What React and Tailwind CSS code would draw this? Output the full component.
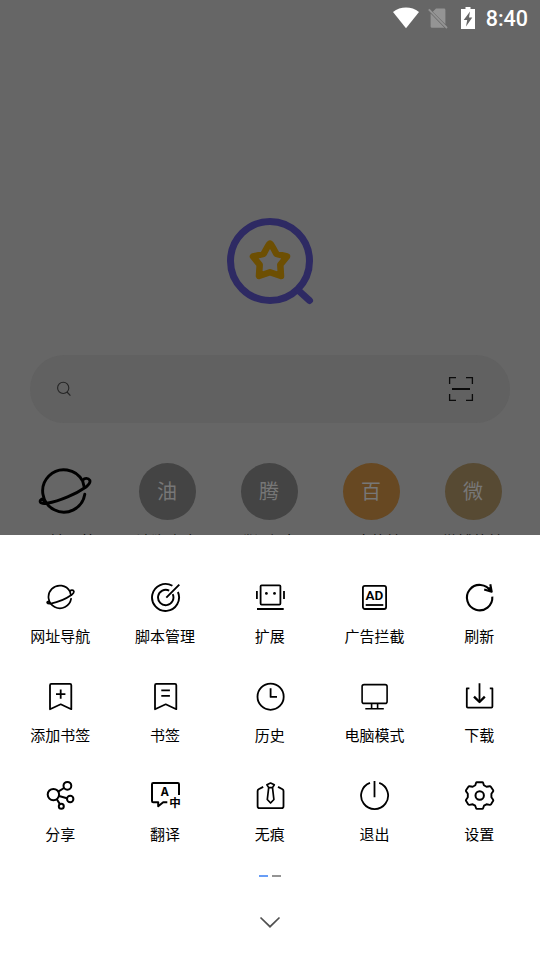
const FONT = "font-['Noto_Sans_CJK_SC',sans-serif]";

function Planet({ className, stroke }) {
  return (
    <svg viewBox="0 0 54 50" className={className} fill="none" stroke="currentColor" strokeWidth={stroke} strokeLinecap="round" strokeLinejoin="round">
      <path d="M46.8 27.3A21.2 21.2 0 1 1 44.7 14.2L46.3 20.5" />
      <path d="M45 13C46.500 10.800 50.300 10.800 51.800 13.200C52.600 15.500 50.500 18 48 20C38 27 22 34 9 36.300C5.500 36.800 3.200 36.800 2.400 35.200C1.600 33.400 3.200 32 5.200 32L6.600 36" />
    </svg>
  );
}

function Icon({ children, width = 1.8 }) {
  return (
    <svg viewBox="0 0 32 32" className="h-8 w-8 shrink-0" fill="none" stroke="currentColor" strokeWidth={width} strokeLinejoin="round">
      {children}
    </svg>
  );
}

const menu = [
  {
    label: "网址导航",
    icon: (
      <span className="flex h-8 w-8 items-center justify-center pb-px">
        <Planet className="h-[27px] w-[29px]" stroke={3.2} />
      </span>
    ),
  },
  {
    label: "脚本管理",
    icon: (
      <Icon width={1.9}>
        <path d="M23.4 3.8A13.5 13.5 0 1 0 28.9 10M20.2 8.6A7.7 7.7 0 1 0 23.7 12.2M17.3 15.7L30.3 2.7" />
      </Icon>
    ),
  },
  {
    label: "扩展",
    icon: (
      <Icon>
        <rect x="6.6" y="3.3" width="19.8" height="19.3" rx="1" />
        <path d="M2.9 9v8M30 9v8M3 27h26.7" />
        <circle cx="12.4" cy="11.4" r="1.4" fill="currentColor" stroke="none" />
        <circle cx="20.5" cy="11.4" r="1.4" fill="currentColor" stroke="none" />
      </Icon>
    ),
  },
  {
    label: "广告拦截",
    icon: (
      <Icon>
        <rect x="3.9" y="3.8" width="23.2" height="23.2" rx="2" />
        <path d="M6.7 23h17.6" />
        <text x="15.5" y="18.2" textAnchor="middle" fill="currentColor" stroke="none" className="font-[Roboto,sans-serif] text-[13.5px] font-semibold">AD</text>
      </Icon>
    ),
  },
  {
    label: "刷新",
    icon: (
      <Icon width={2.1}>
        <path d="M28.3 14.7A12.7 12.7 0 1 1 26.7 9.4M26.3 2.3L27.7 9.7L20.2 7.6M24.5 5.5L27.3 9.4" />
      </Icon>
    ),
  },
  {
    label: "添加书签",
    icon: (
      <Icon>
        <path d="M6 28.2V4.2Q6 2.9 7.3 2.9H26Q27.3 2.9 27.3 4.2V28.2L16.7 23.3ZM16.7 8.4v9.4M12 13.1h9.4" />
      </Icon>
    ),
  },
  {
    label: "书签",
    icon: (
      <Icon>
        <path d="M6 28.2V4.2Q6 2.9 7.3 2.9H26Q27.3 2.9 27.3 4.2V28.2L16.7 23.3ZM12.3 9.3h8.6M12.3 14.8h8.6" />
      </Icon>
    ),
  },
  {
    label: "历史",
    icon: (
      <Icon>
        <circle cx="16.6" cy="15.7" r="13.1" />
        <path d="M16.6 7.3v8.6H23" />
      </Icon>
    ),
  },
  {
    label: "电脑模式",
    icon: (
      <Icon width={1.6}>
        <rect x="3.1" y="3.6" width="25" height="18.8" rx="2" />
        <path d="M12.6 22.4v5.2M18.6 22.4v5.2M6.3 27.7h18.5" />
      </Icon>
    ),
  },
  {
    label: "下载",
    icon: (
      <Icon>
        <path d="M5.4 7.4H2.8V25.6Q2.8 26.6 3.8 26.6H27.4Q28.4 26.6 28.4 25.6V7.4H25.8M15.5 2.3V20.8" />
        <path d="M10 15.6L15.5 21L20.8 15.6" strokeWidth="2.3" />
      </Icon>
    ),
  },
  {
    label: "分享",
    icon: (
      <Icon width={2}>
        <circle cx="9.4" cy="14.6" r="5.7" />
        <circle cx="23.4" cy="5.8" r="3.9" />
        <circle cx="26.2" cy="19" r="3.2" />
        <circle cx="17.3" cy="26.3" r="2.5" />
        <path d="M14.2 11.6L20 8M15.1 16L22.9 18.2M12.8 19.2L15.9 24.1" />
      </Icon>
    ),
  },
  {
    label: "翻译",
    icon: (
      <Icon width={2}>
        <path d="M30 15V4.2Q30 3 28.8 3H4.2Q3 3 3 4.2V21.1Q3 22.3 4.2 22.3H9.2V26.3L14.2 22.3H18.3" />
        <text x="15.7" y="16" textAnchor="middle" fill="currentColor" stroke="none" className="font-['Noto_Sans',sans-serif] text-[11.5px] font-bold">A</text>
        <text x="26" y="26.6" textAnchor="middle" fill="currentColor" stroke="none" className="font-['Noto_Sans_CJK_SC',sans-serif] text-[11.5px] font-bold">中</text>
      </Icon>
    ),
  },
  {
    label: "无痕",
    icon: (
      <Icon>
        <path d="M9.2 6.9L4.6 9.2Q3.6 9.8 3.6 11V26.3Q3.6 28.2 5.5 28.2H27.6Q29.5 28.2 29.5 26.3V11Q29.5 9.8 28.5 9.2L24 6.9" />
        <path d="M14.7 7.6L12.9 4.7L16.6 3L20.3 4.7L18.5 7.6ZM14.7 7.6L13.3 19.5L16.6 23L19.9 19.5L18.5 7.6" strokeWidth="1.7" />
      </Icon>
    ),
  },
  {
    label: "退出",
    icon: (
      <Icon>
        <path d="M11 2.9A13.5 13.5 0 1 0 20.2 2.9M15.5 1V17.2" />
      </Icon>
    ),
  },
  {
    label: "设置",
    icon: (
      <Icon width={1.9}>
        <path d="M12.9 2.200H18.300Q18.900 2.200 19.100 2.800L19.900 5.300L22.500 6.800L25.700 6.200Q26.400 6.100 26.800 6.700L29.200 10.300Q29.500 10.900 29.100 11.400L27.400 13.700V17.300L29.100 19.700Q29.500 20.300 29.200 20.800L26.900 24.500Q26.500 25 25.800 24.900L22.500 24.300L20 25.700L19.100 28.300Q18.900 28.900 18.300 28.900H12.900Q12.300 28.900 12.100 28.300L11.200 25.700L8.700 24.300L5.400 24.900Q4.700 25 4.300 24.500L2 20.800Q1.700 20.300 2.100 19.700L3.800 17.300V13.700L2.100 11.400Q1.700 10.900 2 10.300L4.400 6.700Q4.800 6.100 5.500 6.200L8.700 6.800L11.300 5.300L12.100 2.800Q12.300 2.200 12.900 2.200Z" />
        <circle cx="15.7" cy="15.5" r="4.2" strokeWidth="2" />
      </Icon>
    ),
  },
];

const sites = [
  { label: "网址导航" },
  { glyph: "油", label: "油猴脚本", color: "bg-[#444444]" },
  { glyph: "腾", label: "腾讯视频", color: "bg-[#444444]" },
  { glyph: "百", label: "百度热榜", color: "bg-[#674822]" },
  { glyph: "微", label: "微博热榜", color: "bg-[#574a33]" },
];

function StatusBar() {
  return (
    <header className="flex h-9 shrink-0 items-center justify-end pr-3 text-white">
      <svg viewBox="0 0 26 22" className="mr-[9px] h-[22px] w-[26px]" fill="currentColor">
        <path d="M0 5C7.500-.9 18.500-.9 26 5L13 21.300Z" />
      </svg>
      <svg viewBox="0 0 20 22" className="mr-[13px] h-[22px] w-5">
        <path d="M8 1.500H16Q17.400 1.500 17.400 2.900V17.300L4.800 4.700ZM2.600 6.500L16.500 20.800H4Q2.600 20.800 2.600 19.400Z" fill="#949494" />
        <path d="M.8 2.300L19 21" stroke="#949494" strokeWidth="1.800" />
      </svg>
      <svg viewBox="0 0 14 22" className="mr-[11px] h-[22px] w-[14px]">
        <path d="M4.500 0H9.500V2H14V22H0V2H4.500Z" fill="#fff" />
        <path d="M9 4.500L2.700 13H6.200L5 19.500L11.300 10.500H8Z" fill="#666" />
      </svg>
      <span className="pt-px font-[Roboto,sans-serif] text-[21.5px] font-medium leading-9">8:40</span>
    </header>
  );
}

export default function App() {
  return (
    <main className={`flex h-[960px] w-[540px] flex-col overflow-hidden bg-[#666666] ${FONT}`}>
      <section className="flex h-[535px] shrink-0 flex-col overflow-hidden">
        <StatusBar />
        <svg viewBox="0 0 90 90" className="mt-[180px] h-[90px] w-[90px] shrink-0 self-center" fill="none" strokeLinecap="round" strokeLinejoin="round">
          <g stroke="#2e2a63" strokeWidth="7">
            <circle cx="45" cy="45" r="39.500" />
            <path d="M73.500 74.500L84.500 84.500" />
          </g>
          <path d="M45 27.500Q46 27.500 51.300 37.800L62 40.500L55.300 48.800L56 60L45 56.200L34 60L34.700 48.800L28 40.500L38.700 37.800Q44 27.500 45 27.500Z" stroke="#6d4f03" strokeWidth="6.500" />
        </svg>
        <div className="mx-[30px] mt-[49px] flex h-[68px] shrink-0 items-center justify-between rounded-full bg-[#616161] pl-[26px] pr-9">
          <svg viewBox="0 0 16 16" className="h-4 w-4" fill="none" stroke="#252525" strokeWidth="1.100">
            <circle cx="7.200" cy="6.900" r="5.600" />
            <path d="M11 11L14.400 14.600" />
          </svg>
          <svg viewBox="0 0 26 26" className="h-[26px] w-[26px]" fill="none" stroke="#0b0b0b" strokeWidth="1.300">
            <path d="M1.600 8V1.600H8M18 1.600H24.400V8M24.400 18V24.400H18M8 24.400H1.600V18" />
            <path d="M4 13H22" strokeWidth="2" />
          </svg>
        </div>
        <div className="mt-10 grid shrink-0 grid-cols-5 pl-[14px] pr-4">
          {sites.map((site) => (
            <div key={site.label} className="flex flex-col items-center">
              {site.glyph ? (
                <span className={`flex h-[57px] w-[57px] items-center justify-center rounded-full pb-[2px] text-[20px] text-[#777777] ${site.color}`}>{site.glyph}</span>
              ) : (
                <span className="flex h-[57px] items-center justify-center pr-px pt-px text-black">
                  <Planet className="h-[50px] w-[54px]" stroke={2.9} />
                </span>
              )}
              <span className="mt-[10px] text-[15.5px] leading-[22px] text-black">{site.label}</span>
            </div>
          ))}
        </div>
      </section>
      <section className="flex flex-1 flex-col items-center bg-white px-2 pt-[47px] text-black">
        <div className="grid w-full grid-cols-5">
          {menu.map((item) => (
            <button key={item.label} type="button" className="flex h-[99px] flex-col items-center">
              {item.icon}
              <span className="mt-[11px] pr-[0.5px] text-[15px] leading-[22px]">{item.label}</span>
            </button>
          ))}
        </div>
        <div className="-mt-1 flex gap-1">
          <span className="h-[2px] w-[9px] bg-[#689df6]" />
          <span className="h-[2px] w-[9px] bg-[#949494]" />
        </div>
        <svg viewBox="0 0 22 12" className="mt-[39px] h-3 w-[22px]" fill="none" stroke="#505050" strokeWidth="1.700">
          <path d="M1.500 1.500L11 10.700L20.500 1.500" />
        </svg>
      </section>
    </main>
  );
}
